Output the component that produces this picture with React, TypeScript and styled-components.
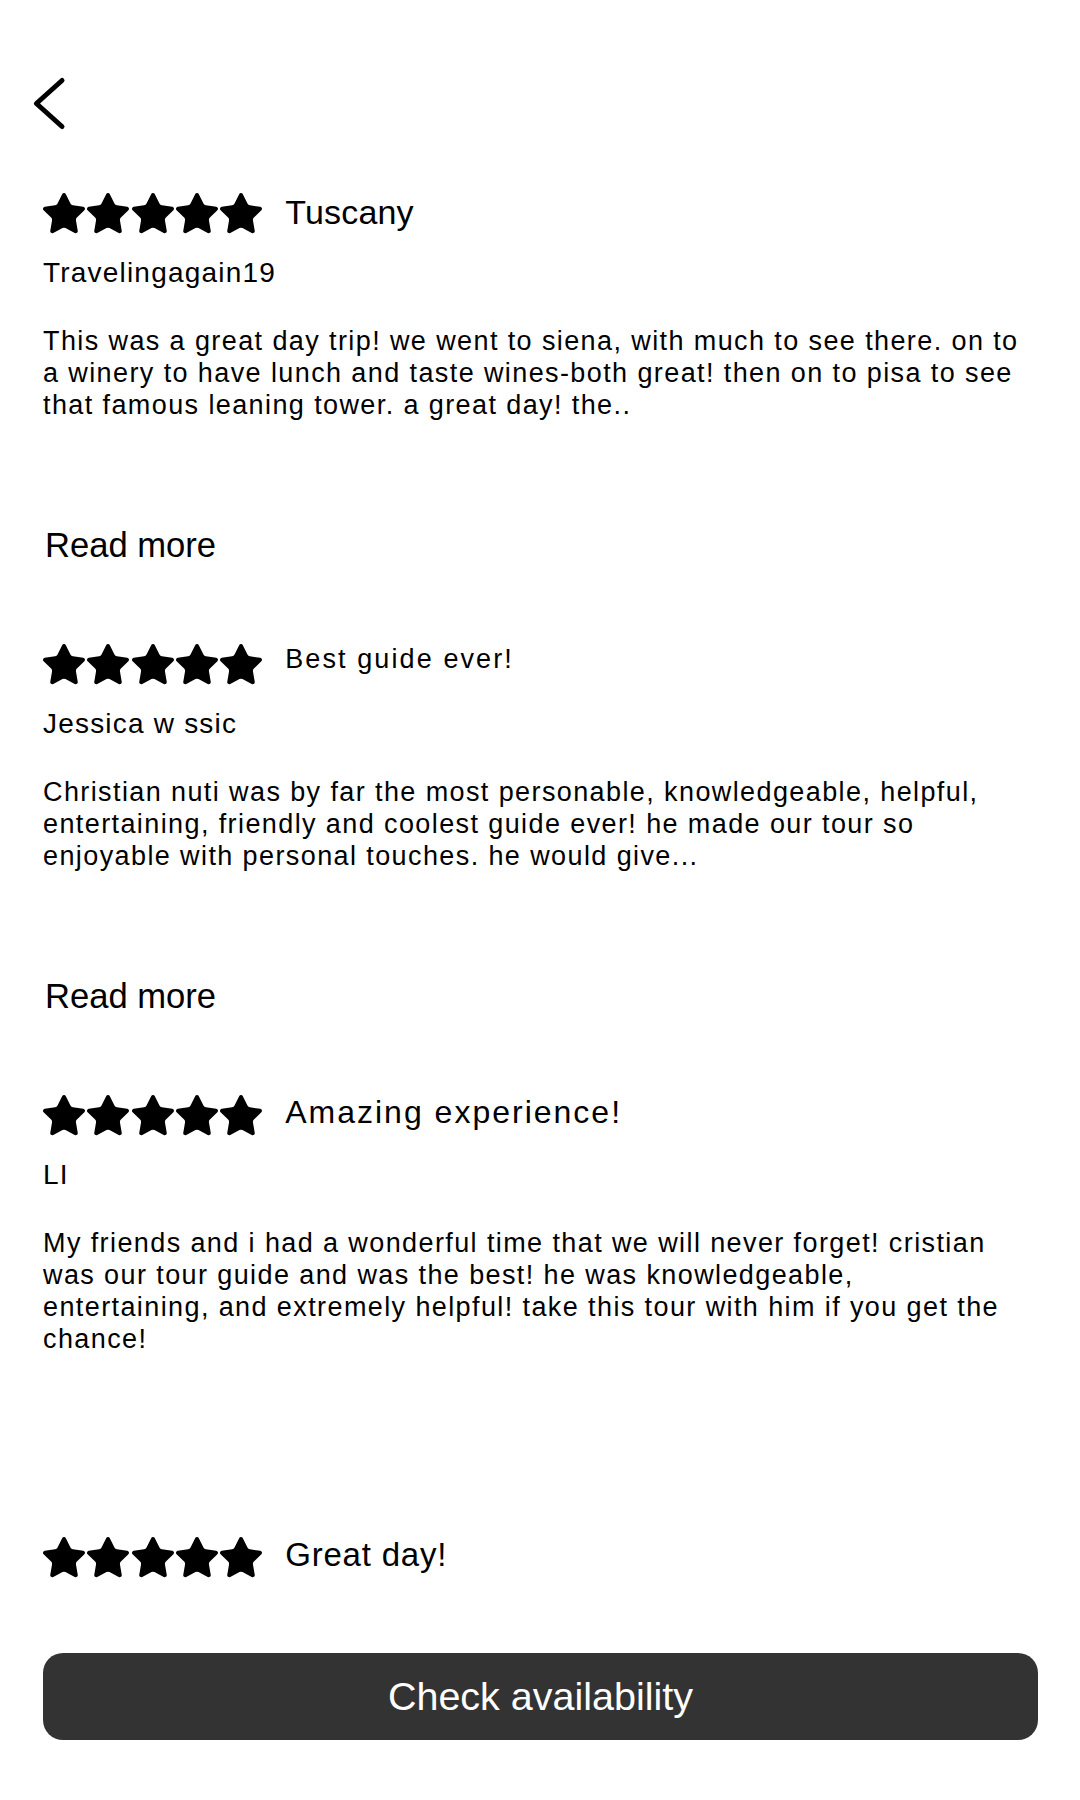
import React from "react";
import styled, { createGlobalStyle } from "styled-components";

const GlobalStyle = createGlobalStyle`
  html, body { margin: 0; padding: 0; background: #fff; }
  body { font-family: "Liberation Sans", Arial, sans-serif; color: #000; }
  * { box-sizing: border-box; }
`;

const Page = styled.div`
  width: 1080px;
  height: 1800px;
  display: flex;
  flex-direction: column;
  overflow: hidden;
  background: #fff;
`;

const Header = styled.header`
  flex: 0 0 193px;
  padding: 76px 0 0 32px;
`;

const BackButton = styled.button`
  border: 0;
  background: none;
  padding: 0;
  width: 36px;
  height: 56px;
  display: block;
  cursor: pointer;
  color: #000;
  svg { display: block; }
`;

const ReviewList = styled.main`
  flex: 1 1 auto;
  min-height: 0;
  overflow: hidden;
  padding: 0 42px 0 43px;
`;

const Card = styled.article`
  display: flex;
  flex-direction: column;
`;

const TitleRow = styled.div`
  display: flex;
  align-items: center;
  height: 41px;
`;

const Stars = styled.div`
  display: flex;
  gap: 2.3px;
  flex: none;
  svg { display: block; }
`;

const Title = styled.h2<{ $size: number; $spacing: number; $dy: number }>`
  margin: ${(p) => p.$dy}px 0 0 23px;
  font-weight: 400;
  font-size: ${(p) => p.$size}px;
  letter-spacing: ${(p) => p.$spacing}px;
  line-height: 1;
  white-space: nowrap;
`;

const Author = styled.p`
  margin: 23px 0 0;
  font-size: 28px;
  line-height: 32px;
  letter-spacing: 1.2px;
`;

const Body = styled.p`
  margin: 36px 0 0;
  max-width: 980px;
  min-height: 128px;
  font-size: 27px;
  line-height: 32px;
  letter-spacing: 1.4px;
`;

const CardFooter = styled.div<{ $height: number }>`
  flex: none;
  height: ${(p) => p.$height}px;
  padding-top: 72px;
`;

const ReadMore = styled.button`
  border: 0;
  background: none;
  padding: 0 0 0 2px;
  font-family: "Liberation Sans", Arial, sans-serif;
  font-size: 34.6px;
  line-height: 40px;
  color: #000;
  cursor: pointer;
`;

const BottomBar = styled.footer`
  flex: 0 0 210px;
  padding: 63px 42px 60px 43px;
  background: #fff;
`;

const CheckButton = styled.button`
  width: 100%;
  height: 87px;
  border: 0;
  border-radius: 20px;
  background: #333333;
  color: #fff;
  font-family: "Liberation Sans", Arial, sans-serif;
  font-size: 39.5px;
  display: flex;
  align-items: center;
  justify-content: center;
  cursor: pointer;
`;

const STAR_PATH =
  "M11.525 2.295a.53.53 0 0 1 .95 0l2.31 4.679a2.123 2.123 0 0 0 1.595 1.16l5.166.756a.53.53 0 0 1 .294.904l-3.736 3.638a2.123 2.123 0 0 0-.611 1.878l.882 5.14a.53.53 0 0 1-.771.56l-4.618-2.428a2.122 2.122 0 0 0-1.973 0L6.396 21.01a.53.53 0 0 1-.77-.56l.881-5.139a2.122 2.122 0 0 0-.611-1.879L2.16 9.795a.53.53 0 0 1 .294-.906l5.165-.755a2.122 2.122 0 0 0 1.597-1.160z";

const StarIcon = () => (
  <svg width="42" height="40.4" viewBox="1.5 1.5 21 20.2" aria-hidden="true">
    <path d={STAR_PATH} fill="#000" stroke="#000" strokeWidth="1" strokeLinejoin="round" />
  </svg>
);

type Review = {
  title: string;
  size: number;
  spacing: number;
  dy: number;
  author: string;
  text: string;
  readMore: boolean;
};

const reviews: Review[] = [
  {
    title: "Tuscany",
    size: 34,
    spacing: 0.2,
    dy: -4,
    author: "Travelingagain19",
    text:
      "This was a great day trip! we went to siena, with much to see there. on to a winery to have lunch and taste wines-both great! then on to pisa to see that famous leaning tower. a great day! the..",
    readMore: true,
  },
  {
    title: "Best guide ever!",
    size: 27,
    spacing: 2.1,
    dy: -11,
    author: "Jessica w ssic",
    text:
      "Christian nuti was by far the most personable, knowledgeable, helpful, entertaining, friendly and coolest guide ever! he made our tour so enjoyable with personal touches. he would give...",
    readMore: true,
  },
  {
    title: "Amazing experience!",
    size: 32,
    spacing: 2,
    dy: -7,
    author: "LI",
    text:
      "My friends and i had a wonderful time that we will never forget! cristian was our tour guide and was the best! he was knowledgeable, entertaining, and extremely helpful! take this tour with him if you get the chance!",
    readMore: false,
  },
  {
    title: "Great day!",
    size: 33,
    spacing: 0.8,
    dy: -6,
    author: "",
    text: "",
    readMore: false,
  },
];

const ReviewCard = ({ review }: { review: Review }) => (
  <Card>
    <TitleRow>
      <Stars>
        {[0, 1, 2, 3, 4].map((i) => (
          <StarIcon key={i} />
        ))}
      </Stars>
      <Title $size={review.size} $spacing={review.spacing} $dy={review.dy}>
        {review.title}
      </Title>
    </TitleRow>
    {review.author && <Author>{review.author}</Author>}
    {review.text && <Body>{review.text}</Body>}
    {review.text && (
      <CardFooter $height={review.readMore ? 191 : 182}>
        {review.readMore && <ReadMore>Read more</ReadMore>}
      </CardFooter>
    )}
  </Card>
);

export default function App() {
  return (
    <>
      <GlobalStyle />
      <Page>
        <Header>
          <BackButton aria-label="Back">
            <svg width="36" height="56" viewBox="0 0 36 56" fill="none">
              <path
                d="M30 4.5 L4.4 27.5 L30 50.5"
                stroke="#000"
                strokeWidth="5"
                strokeLinecap="round"
                strokeLinejoin="round"
              />
            </svg>
          </BackButton>
        </Header>
        <ReviewList>
          {reviews.map((r) => (
            <ReviewCard key={r.title} review={r} />
          ))}
        </ReviewList>
        <BottomBar>
          <CheckButton>Check availability</CheckButton>
        </BottomBar>
      </Page>
    </>
  );
}
